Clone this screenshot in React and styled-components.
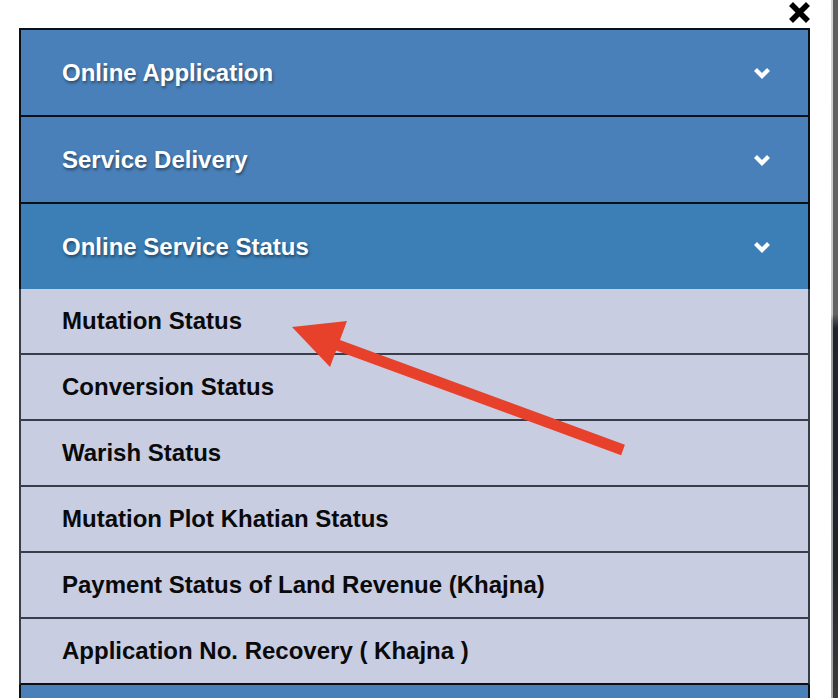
import React from "react";
import styled, { createGlobalStyle } from "styled-components";

const GlobalStyle = createGlobalStyle`
  html, body { margin: 0; padding: 0; background: #ffffff; }
  body { font-family: "Liberation Sans", Arial, sans-serif; overflow: hidden; }
`;

const Page = styled.div`
  position: relative;
  display: flex;
  width: 838px;
  height: 698px;
  overflow: hidden;
  background: #ffffff;
`;

const Main = styled.div`
  width: 831px;
  display: flex;
  flex-direction: column;
`;

const Strip = styled.div`
  width: 7px;
  display: flex;
`;

const StripLight = styled.div`
  width: 2px;
  background: linear-gradient(#d4d4d4, #c8c8c8 45%, #9a9a9a 46%, #a8a8a8);
`;

const StripDark = styled.div`
  flex: 1;
  background: linear-gradient(#5e5e5e, #626262 45%, #1d2431 47%, #20232a 80%, #3a3a3a);
`;

const TopBar = styled.div`
  height: 31px;
  display: flex;
  justify-content: flex-end;
  align-items: flex-end;
  padding-right: 21px;
`;

const CloseButton = styled.button`
  width: 22px;
  height: 24px;
  padding: 0;
  border: 0;
  background: none;
  display: flex;
  align-items: center;
  justify-content: center;
  margin-bottom: 4px;
`;

const Panel = styled.div`
  margin-left: 19px;
  width: 791px;
  border-top: 2px solid #0b0f16;
  display: flex;
  flex-direction: column;
`;

const Header = styled.div`
  height: 85px;
  display: flex;
  align-items: center;
  justify-content: space-between;
  padding: 0 37px 0 41px;
  background: ${(p) => (p.$active ? "#3b7fb6" : "#4a80b9")};
  border-left: 2px solid #0b0f16;
  border-right: 2px solid #0b0f16;
  border-bottom: ${(p) => (p.$last ? "0" : "2px solid #0b0f16")};
`;

const HeaderTitle = styled.span`
  color: #ffffff;
  font-size: 24px;
  font-weight: 700;
  text-shadow: 1px 2px 3px rgba(0, 0, 0, 0.45);
`;

const SubItem = styled.div`
  height: 64px;
  display: flex;
  align-items: center;
  padding-left: 41px;
  background: #c8cde2;
  border-left: 2px solid #383d4a;
  border-right: 2px solid #383d4a;
  border-bottom: 2px solid ${(p) => (p.$last ? "#0b0f16" : "#383d4a")};
`;

const SubText = styled.span`
  color: #0a0a0a;
  font-size: 24px;
  font-weight: 700;
`;

const NextHeader = styled.div`
  height: 20px;
  background: #4a80b9;
  border-left: 2px solid #0b0f16;
  border-right: 2px solid #0b0f16;
`;

const ArrowOverlay = styled.svg`
  position: absolute;
  left: 0;
  top: 0;
  pointer-events: none;
`;

const Chevron = () => (
  <svg width="18" height="14" viewBox="0 0 18 14">
    <polyline
      points="2.5,3.5 9,10 15.5,3.5"
      fill="none"
      stroke="#ffffff"
      strokeWidth="4.2"
      strokeLinecap="butt"
      strokeLinejoin="miter"
    />
  </svg>
);

const CloseIcon = () => (
  <svg width="21" height="21" viewBox="0 0 21 21">
    <path d="M4 4 L17 17 M17 4 L4 17" stroke="#000" strokeWidth="5.6" strokeLinecap="square" />
  </svg>
);

const headers = [
  { title: "Online Application" },
  { title: "Service Delivery" },
  { title: "Online Service Status", active: true },
];

const items = [
  "Mutation Status",
  "Conversion Status",
  "Warish Status",
  "Mutation Plot Khatian Status",
  "Payment Status of Land Revenue (Khajna)",
  "Application No. Recovery ( Khajna )",
];

export default function App() {
  return (
    <>
      <GlobalStyle />
      <Page>
        <Main>
          <TopBar>
            <CloseButton aria-label="Close">
              <CloseIcon />
            </CloseButton>
          </TopBar>
          <Panel>
            {headers.map((h, i) => (
              <Header key={h.title} $active={h.active} $last={i === headers.length - 1}>
                <HeaderTitle>{h.title}</HeaderTitle>
                <Chevron />
              </Header>
            ))}
            {items.map((t, i) => (
              <SubItem key={t} $last={i === items.length - 1}>
                <SubText>{t}</SubText>
              </SubItem>
            ))}
            <NextHeader />
          </Panel>
        </Main>
        <Strip>
          <StripLight />
          <StripDark />
        </Strip>
        <ArrowOverlay width="838" height="698" viewBox="0 0 838 698">
          <line x1="623" y1="450" x2="332" y2="343" stroke="#e8412b" strokeWidth="11" />
          <polygon points="292,327 347,321 330,367" fill="#e8412b" />
        </ArrowOverlay>
      </Page>
    </>
  );
}
